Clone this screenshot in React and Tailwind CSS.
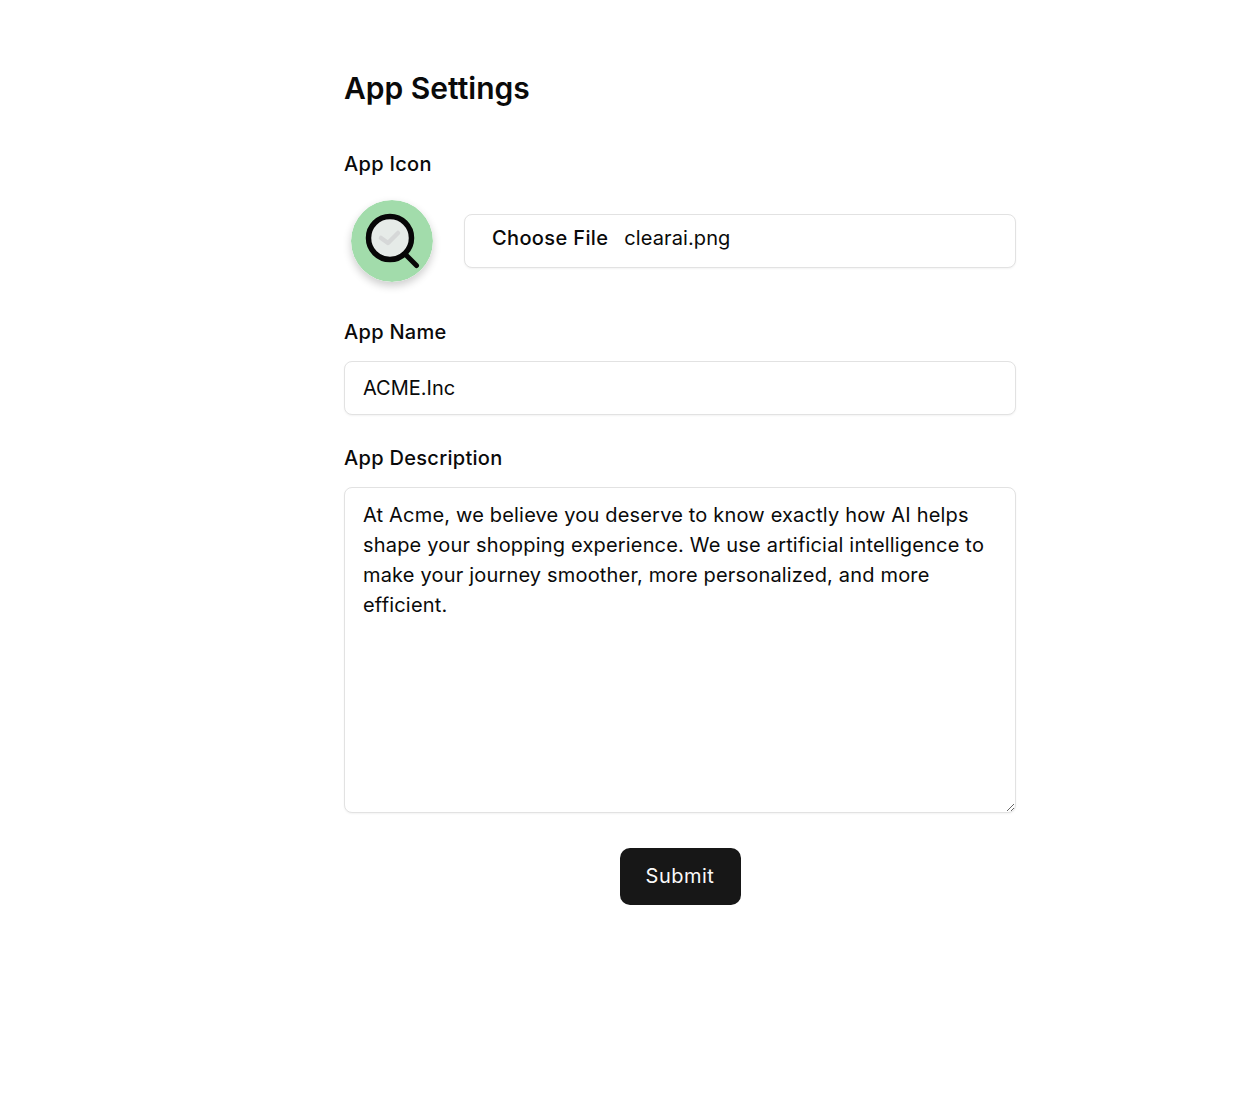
import React from "react";

const AppIcon = () => (
  <svg width="82" height="82" viewBox="0 0 82 82" className="rounded-full shadow-[0_4px_8px_rgba(0,0,0,0.2)]">
    <circle cx="41" cy="41" r="41" fill="#a2dcab" />
    <circle cx="39" cy="38" r="21.5" fill="#e6ebe8" stroke="#070707" strokeWidth="5.5" />
    <path d="M30 38l7 5 10-10" fill="none" stroke="#d6d8d8" strokeWidth="4.5" strokeLinecap="round" strokeLinejoin="round" />
    <path d="M54 54l11.5 11.5" fill="none" stroke="#070707" strokeWidth="5" strokeLinecap="round" />
  </svg>
);

export default function App() {
  return (
    <div className="min-h-[1093px] bg-white pl-[344px] pt-[69px] font-['Inter',sans-serif] text-[#0a0a0a]">
      <div className="w-[672px]">
        <h1 className="text-[30px] font-semibold leading-[38px]">App Settings</h1>

        <label className="mt-[43px] block text-[20px] font-medium leading-[28px] tracking-[0.3px]">App Icon</label>
        <div className="mt-[15px] flex items-center gap-[24px]">
          <div className="flex h-[96px] w-[96px] items-center justify-center">
            <AppIcon />
          </div>
          <div className="flex h-[54px] flex-1 items-start rounded-[8px] border border-[#e2e2e2] bg-white pt-[8px] pl-[27px] text-[20px] leading-[30px] shadow-[0_1px_2px_rgba(0,0,0,0.05)]">
            <button type="button" className="font-medium tracking-[0.36px]">Choose File</button>
            <span className="ml-[16px] tracking-[0.1px]">clearai.png</span>
          </div>
        </div>

        <label className="mt-[29px] block text-[20px] font-medium leading-[28px] tracking-[0.3px]">App Name</label>
        <input
          readOnly
          value="ACME.Inc"
          className="mt-[15px] block h-[54px] w-full rounded-[8px] border border-[#e2e2e2] bg-white px-[18px] text-[20px] shadow-[0_1px_2px_rgba(0,0,0,0.05)] outline-none"
        />

        <label className="mt-[29px] block text-[20px] font-medium leading-[28px] tracking-[0.3px]">App Description</label>
        <textarea
          readOnly
          value="At Acme, we believe you deserve to know exactly how AI helps shape your shopping experience. We use artificial intelligence to make your journey smoother, more personalized, and more efficient."
          className="mt-[15px] block h-[326px] w-full rounded-[8px] border border-[#e2e2e2] bg-white px-[18px] py-[12px] text-[20px] leading-[30px] tracking-[0.18px] shadow-[0_1px_2px_rgba(0,0,0,0.05)] outline-none"
        />

        <div className="mt-[35px] flex justify-center">
          <button type="button" className="h-[57px] w-[121px] rounded-[10px] bg-[#171717] pb-[1px] text-[20px] font-normal tracking-[0.5px] text-[#fafafa]">
            Submit
          </button>
        </div>
      </div>
    </div>
  );
}
